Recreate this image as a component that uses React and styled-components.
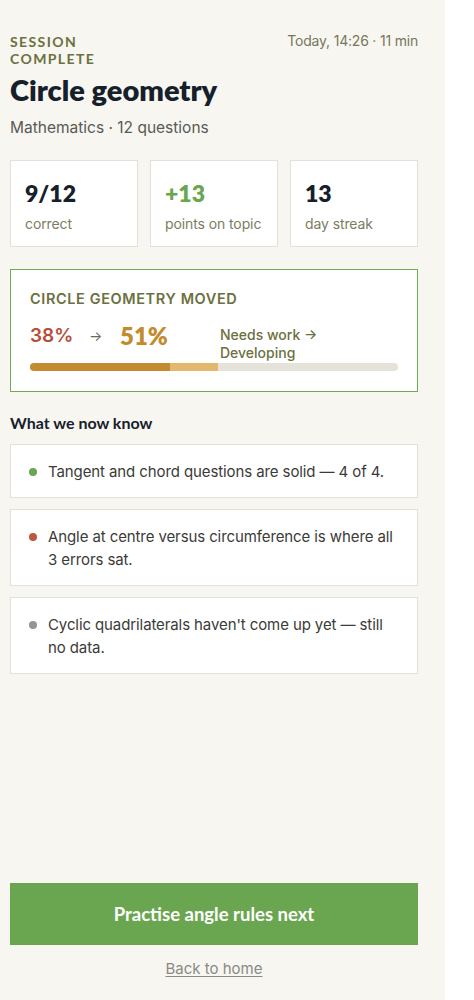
import React from "react";
import styled, { createGlobalStyle } from "styled-components";

const GlobalStyle = createGlobalStyle`
  html, body {
    margin: 0;
    padding: 0;
    background: #ffffff;
  }
  * {
    box-sizing: border-box;
  }
`;

const Screen = styled.div`
  width: 445px;
  min-height: 1000px;
  background: #f7f6f1;
  padding: 33px 27px 21px 10px;
  display: flex;
  flex-direction: column;
  font-family: Inter, "Noto Sans", sans-serif;
  color: #1b2430;
`;

const TopRow = styled.div`
  display: flex;
  justify-content: space-between;
  align-items: flex-start;
`;

const Eyebrow = styled.div`
  font-family: Lato, "Noto Sans", sans-serif;
  font-weight: 700;
  font-size: 14px;
  line-height: 17px;
  letter-spacing: 1.4px;
  color: #6c7040;
  text-transform: uppercase;
`;

const Meta = styled.div`
  margin-top: -2px;
  font-size: 14px;
  line-height: 20px;
  color: #77775e;
  letter-spacing: -0.2px;
`;

const Title = styled.h1`
  margin: 5px 0 0;
  font-family: Lato, "Noto Sans", sans-serif;
  font-weight: 800;
  font-size: 29px;
  line-height: 36px;
  color: #16202b;
`;

const Subtitle = styled.div`
  margin-top: 10px;
  font-size: 15.5px;
  line-height: 20px;
  color: #5a5a55;
`;

const Stats = styled.div`
  margin-top: 22px;
  display: grid;
  grid-template-columns: repeat(3, 1fr);
  gap: 12px;
`;

const StatCard = styled.div`
  background: #ffffff;
  border: 1px solid #e3e1d7;
  height: 87px;
  padding: 17px 14px 0;
`;

const StatValue = styled.div`
  font-family: Lato, "Noto Sans", sans-serif;
  font-weight: 800;
  font-size: 23px;
  line-height: 30px;
  color: ${(p) => (p.$accent ? "#6aa64f" : "#16202b")};
`;

const StatLabel = styled.div`
  margin-top: 7px;
  font-size: 14px;
  line-height: 18px;
  color: #7b7d5e;
  letter-spacing: -0.1px;
`;

const MovedCard = styled.div`
  margin-top: 22px;
  background: #ffffff;
  border: 1.5px solid #6fab55;
  padding: 20px 19px 20px;
`;

const MovedTitle = styled.div`
  font-size: 14.5px;
  line-height: 17px;
  font-weight: 600;
  letter-spacing: 0.6px;
  color: #6c7040;
  text-transform: uppercase;
`;

const MoveRow = styled.div`
  margin-top: 14px;
  display: flex;
  align-items: flex-start;
`;

const FromPct = styled.div`
  font-size: 19px;
  line-height: 30px;
  font-weight: 600;
  color: #b84c3a;
  width: 59px;
`;

const Arrow = styled.div`
  font-size: 14px;
  line-height: 30px;
  color: #6a6a58;
  width: 31px;
`;

const ToPct = styled.div`
  font-family: Lato, "Noto Sans", sans-serif;
  font-size: 24px;
  line-height: 30px;
  font-weight: 800;
  color: #c28b2e;
  width: 100px;
`;

const Band = styled.div`
  padding-top: 5px;
  font-size: 14px;
  line-height: 18px;
  font-weight: 500;
  color: #6c7040;
  width: 110px;
`;

const Track = styled.div`
  margin-top: 1px;
  height: 8px;
  border-radius: 4px;
  background: #e5e3d9;
  overflow: hidden;
  display: flex;
`;

const Fill = styled.div`
  height: 100%;
  background: ${(p) => p.$color};
`;

const SectionTitle = styled.h2`
  margin: 20px 0 0;
  font-family: Lato, "Noto Sans", sans-serif;
  font-size: 16px;
  line-height: 22px;
  font-weight: 700;
  color: #17202a;
`;

const Findings = styled.div`
  margin-top: 10px;
  display: flex;
  flex-direction: column;
  gap: 11px;
`;

const Finding = styled.div`
  background: #ffffff;
  border: 1px solid #e3e1d7;
  padding: 15px 20px 14px 18px;
  display: flex;
  align-items: flex-start;
  gap: 11px;
`;

const Dot = styled.span`
  flex: none;
  width: 8px;
  height: 8px;
  border-radius: 50%;
  margin-top: 8px;
  background: ${(p) => p.$color};
`;

const FindingText = styled.div`
  font-size: 15px;
  line-height: 23px;
  color: #3b3b38;
  letter-spacing: -0.1px;
`;

const Spacer = styled.div`
  flex: 1;
`;

const PrimaryButton = styled.button`
  width: 100%;
  height: 62px;
  border: none;
  background: #6aa64f;
  color: #ffffff;
  font-family: Lato, "Noto Sans", sans-serif;
  font-size: 18.5px;
  font-weight: 700;
  cursor: pointer;
`;

const BackLink = styled.a`
  display: block;
  margin-top: 14px;
  text-align: center;
  font-size: 15px;
  line-height: 20px;
  color: #8a8a85;
  text-decoration: underline;
  text-underline-offset: 2px;
  cursor: pointer;
`;

const stats = [
  { value: "9/12", label: "correct" },
  { value: "+13", label: "points on topic", accent: true },
  { value: "13", label: "day streak" },
];

const findings = [
  { color: "#6aa64f", text: "Tangent and chord questions are solid — 4 of 4." },
  { color: "#bf563f", text: "Angle at centre versus circumference is where all 3 errors sat." },
  { color: "#95958d", text: "Cyclic quadrilaterals haven't come up yet — still no data." },
];

export default function App() {
  const from = 38;
  const to = 51;
  return (
    <>
      <GlobalStyle />
      <Screen>
        <TopRow>
          <Eyebrow>
            Session
            <br />
            Complete
          </Eyebrow>
          <Meta>Today, 14:26 · 11 min</Meta>
        </TopRow>
        <Title>Circle geometry</Title>
        <Subtitle>Mathematics · 12 questions</Subtitle>

        <Stats>
          {stats.map((s) => (
            <StatCard key={s.label}>
              <StatValue $accent={s.accent}>{s.value}</StatValue>
              <StatLabel>{s.label}</StatLabel>
            </StatCard>
          ))}
        </Stats>

        <MovedCard>
          <MovedTitle>Circle geometry moved</MovedTitle>
          <MoveRow>
            <FromPct>{from}%</FromPct>
            <Arrow>→</Arrow>
            <ToPct>{to}%</ToPct>
            <Band>Needs work → Developing</Band>
          </MoveRow>
          <Track>
            <Fill $color="#c48c31" style={{ width: `${from}%` }} />
            <Fill $color="#e3b86c" style={{ width: `${to - from}%` }} />
          </Track>
        </MovedCard>

        <SectionTitle>What we now know</SectionTitle>
        <Findings>
          {findings.map((f) => (
            <Finding key={f.text}>
              <Dot $color={f.color} />
              <FindingText>{f.text}</FindingText>
            </Finding>
          ))}
        </Findings>

        <Spacer />
        <PrimaryButton>Practise angle rules next</PrimaryButton>
        <BackLink>Back to home</BackLink>
      </Screen>
    </>
  );
}
